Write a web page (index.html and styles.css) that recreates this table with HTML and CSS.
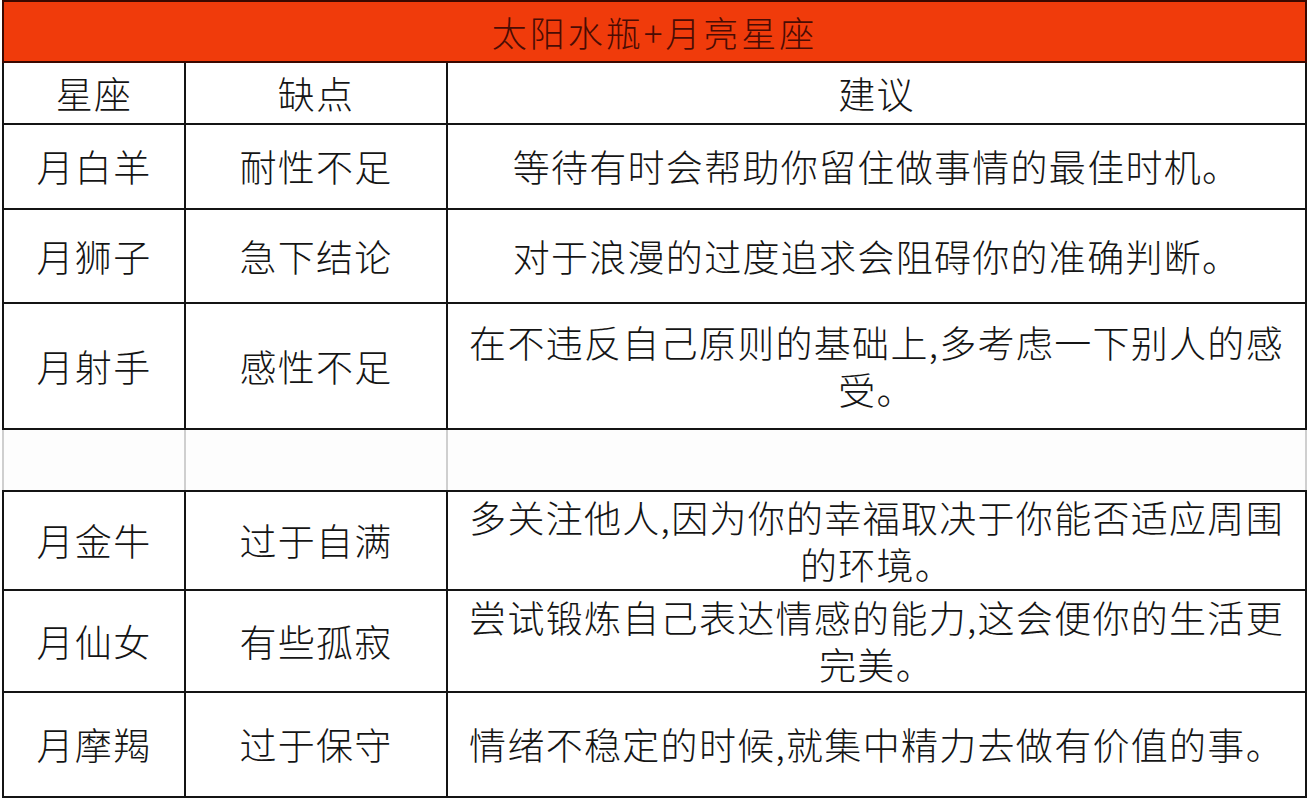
FILE: index.html
```html
<!DOCTYPE html>
<html lang="zh-CN">
<head>
<meta charset="utf-8">
<title>太阳水瓶+月亮星座</title>
<link rel="stylesheet" href="styles.css">
</head>
<body>
<table class="sheet">
  <colgroup>
    <col class="c1">
    <col class="c2">
    <col class="c3">
  </colgroup>
  <tr class="title-row">
    <th colspan="3" class="title">太阳水瓶+月亮星座</th>
  </tr>
  <tr class="head-row">
    <td>星座</td>
    <td>缺点</td>
    <td>建议</td>
  </tr>
  <tr class="r1">
    <td>月白羊</td>
    <td>耐性不足</td>
    <td>等待有时会帮助你留住做事情的最佳时机。</td>
  </tr>
  <tr class="r2">
    <td>月狮子</td>
    <td>急下结论</td>
    <td>对于浪漫的过度追求会阻碍你的准确判断。</td>
  </tr>
  <tr class="r3">
    <td>月射手</td>
    <td>感性不足</td>
    <td>在不违反自己原则的基础上,多考虑一下别人的感受。</td>
  </tr>
  <tr class="blank">
    <td></td>
    <td></td>
    <td></td>
  </tr>
  <tr class="r4">
    <td>月金牛</td>
    <td>过于自满</td>
    <td>多关注他人,因为你的幸福取决于你能否适应周围的环境。</td>
  </tr>
  <tr class="r5">
    <td>月仙女</td>
    <td>有些孤寂</td>
    <td>尝试锻炼自己表达情感的能力,这会便你的生活更完美。</td>
  </tr>
  <tr class="r6">
    <td>月摩羯</td>
    <td>过于保守</td>
    <td>情绪不稳定的时候,就集中精力去做有价值的事。</td>
  </tr>
</table>
</body>
</html>
```

FILE: styles.css
```css
html, body {
  margin: 0;
  padding: 0;
  background: #ffffff;
}

.sheet {
  margin: 0 0 0 2px;
  width: 1303px;
  border-collapse: collapse;
  table-layout: fixed;
  font-family: "Noto Sans CJK SC", "Noto Sans", sans-serif;
  color: #151515;
}

.c1 { width: 182px; }
.c2 { width: 262px; }
.c3 { width: 859px; }

.sheet td,
.sheet th {
  border: 2.5px solid #141414;
  padding: 0 10px;
  text-align: center;
  vertical-align: middle;
  font-size: 37px;
  font-weight: 300;
  line-height: 47px;
  letter-spacing: 1.3px;
}

.sheet th.title {
  background: #f03b0b;
  color: #4a0c04;
  font-size: 35px;
  letter-spacing: 3px;
  border-color: #3a0800;
  line-height: 40px;
}

.title-row { height: 61px; }
.head-row { height: 62px; }
.r1 { height: 85px; }
.r2 { height: 94px; }
.r3 { height: 126px; }
.blank { height: 62px; }
.r4 { height: 99px; }
.r5 { height: 102px; }
.r6 { height: 105px; }

.blank td {
  border-left-color: #cfcfcf;
  border-right-color: #cfcfcf;
  border-bottom-color: #141414;
  background: #fdfdfd;
}
```
